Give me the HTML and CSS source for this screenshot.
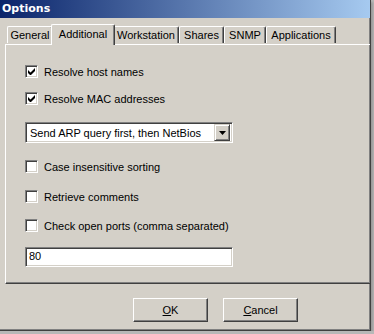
FILE: index.html
```html
<!DOCTYPE html>
<html lang="en">
<head>
    <meta charset="UTF-8">
    <title>Options</title>
    <link rel="stylesheet" href="styles.css">
</head>
<body>
    <div class="window">
        <div class="titlebar">Options</div>

        <div class="tabs">
            <div class="tab tab-general">General</div>
            <div class="tab tab-additional active">Additional</div>
            <div class="tab tab-workstation">Workstation</div>
            <div class="tab tab-shares">Shares</div>
            <div class="tab tab-snmp">SNMP</div>
            <div class="tab tab-apps">Applications</div>
        </div>

        <div class="panel">
            <!-- name resolution -->
            <label class="check-row first">
                <span class="checkbox checked">
                    <svg width="7" height="7" viewBox="0 0 7 7"><path d="M0 2v3l2 2h1l4-4V0L2.5 4.5z" fill="#000"/></svg>
                </span>
                Resolve host names
            </label>
            <label class="check-row gap-14">
                <span class="checkbox checked">
                    <svg width="7" height="7" viewBox="0 0 7 7"><path d="M0 2v3l2 2h1l4-4V0L2.5 4.5z" fill="#000"/></svg>
                </span>
                Resolve MAC addresses
            </label>

            <div class="select">
                <span class="select-text">Send ARP query first, then NetBios</span>
                <span class="select-btn">
                    <svg width="7" height="4" viewBox="0 0 7 4"><path d="M0 0h7L3.5 4z" fill="#000"/></svg>
                </span>
            </div>

            <!-- other options -->
            <label class="check-row gap-17">
                <span class="checkbox"></span>
                Case insensitive sorting
            </label>
            <label class="check-row gap-17">
                <span class="checkbox"></span>
                Retrieve comments
            </label>
            <label class="check-row gap-16">
                <span class="checkbox"></span>
                Check open ports (comma separated)
            </label>

            <div class="textbox">80</div>
        </div>

        <div class="buttons">
            <button class="btn"><u>O</u>K</button>
            <button class="btn"><u>C</u>ancel</button>
        </div>
    </div>
</body>
</html>
```

FILE: styles.css
```css
body {
    margin: 0;
    background-color: #b8b8b8;
    font-family: 'Liberation Sans', Arial, sans-serif;
    font-size: 11px;
    color: #000;
}

.window {
    width: 370px;
    height: 330px;
    background-color: #d4d0c8;
    border-right: 1px solid #404040;
    border-bottom: 1px solid #404040;
    box-shadow: inset -1px -1px 0 #808080, 2px 2px 2px #9a9a9a;
    display: flex;
    flex-direction: column;
}

.titlebar {
    height: 18px;
    line-height: 18px;
    padding-left: 2px;
    color: #fff;
    font-family: 'DejaVu Sans', sans-serif;
    font-weight: bold;
    font-size: 11px;
    background: linear-gradient(to right, #0a246a, #a6caf0);
}

.tabs {
    display: flex;
    align-items: flex-end;
    height: 26px;
    padding-left: 7px;
}

.tab {
    height: 16px;
    line-height: 16px;
    text-align: center;
    border-top: 1px solid #fff;
    border-left: 1px solid #fff;
    border-right: 1px solid #404040;
    box-shadow: inset -1px 0 0 #808080;
    border-radius: 2px 2px 0 0;
    box-sizing: border-box;
    height: 17px;
    margin-bottom: 1px;
}

.tab-general { width: 46px; }
.tab-additional { width: 64px; }
.tab-workstation { width: 66px; }
.tab-shares { width: 45px; }
.tab-snmp { width: 42px; }
.tab-apps { width: 70px; }

.tab.active {
    height: 21px;
    line-height: 18px;
    margin: 0 -2px -1px -2px;
    position: relative;
    z-index: 1;
    background-color: #d4d0c8;
    padding: 0 2px;
}

.tab.active + .tab {
    margin-left: 0;
}

.panel {
    margin-left: 5px;
    height: 240px;
    box-sizing: border-box;
    border-top: 1px solid #fff;
    border-left: 1px solid #fff;
    border-bottom: 1px solid #404040;
    box-shadow: inset 0 -1px 0 #808080;
    padding-left: 19px;
    display: flex;
    flex-direction: column;
    align-items: flex-start;
}

.check-row {
    display: flex;
    align-items: center;
    height: 13px;
    gap: 6px;
    white-space: nowrap;
}

.first { margin-top: 20px; }
.gap-14 { margin-top: 14px; }
.gap-16 { margin-top: 16px; }
.gap-17 { margin-top: 17px; }

.checkbox {
    width: 13px;
    height: 13px;
    box-sizing: border-box;
    background-color: #fff;
    border-top: 1px solid #808080;
    border-left: 1px solid #808080;
    border-right: 1px solid #fff;
    border-bottom: 1px solid #fff;
    box-shadow: inset 1px 1px 0 #404040, inset -1px -1px 0 #d4d0c8;
    display: flex;
    align-items: center;
    justify-content: center;
}

.select {
    margin-top: 17px;
    width: 208px;
    height: 21px;
    box-sizing: border-box;
    background-color: #fff;
    border-top: 1px solid #808080;
    border-left: 1px solid #808080;
    border-right: 1px solid #fff;
    border-bottom: 1px solid #fff;
    box-shadow: inset 1px 1px 0 #404040, inset -1px -1px 0 #d4d0c8;
    display: flex;
    align-items: center;
    padding: 2px;
}

.select-text {
    flex: 1;
    padding-left: 2px;
    white-space: nowrap;
}

.select-btn {
    width: 16px;
    height: 17px;
    box-sizing: border-box;
    background-color: #d4d0c8;
    border-top: 1px solid #d4d0c8;
    border-left: 1px solid #d4d0c8;
    border-right: 1px solid #404040;
    border-bottom: 1px solid #404040;
    box-shadow: inset 1px 1px 0 #fff, inset -1px -1px 0 #808080;
    display: flex;
    align-items: center;
    justify-content: center;
}

.textbox {
    margin-top: 15px;
    width: 208px;
    height: 20px;
    line-height: 16px;
    box-sizing: border-box;
    background-color: #fff;
    border-top: 1px solid #808080;
    border-left: 1px solid #808080;
    border-right: 1px solid #fff;
    border-bottom: 1px solid #fff;
    box-shadow: inset 1px 1px 0 #404040, inset -1px -1px 0 #d4d0c8;
    padding-left: 3px;
}

.buttons {
    display: flex;
    gap: 15px;
    padding: 14px 0 0 133px;
}

.btn {
    width: 75px;
    height: 24px;
    margin: 0;
    padding: 0;
    font-family: 'Liberation Sans', Arial, sans-serif;
    font-size: 11px;
    color: #000;
    background-color: #d4d0c8;
    border-top: 1px solid #fff;
    border-left: 1px solid #fff;
    border-right: 1px solid #404040;
    border-bottom: 1px solid #404040;
    box-shadow: inset -1px -1px 0 #808080;
}
```
